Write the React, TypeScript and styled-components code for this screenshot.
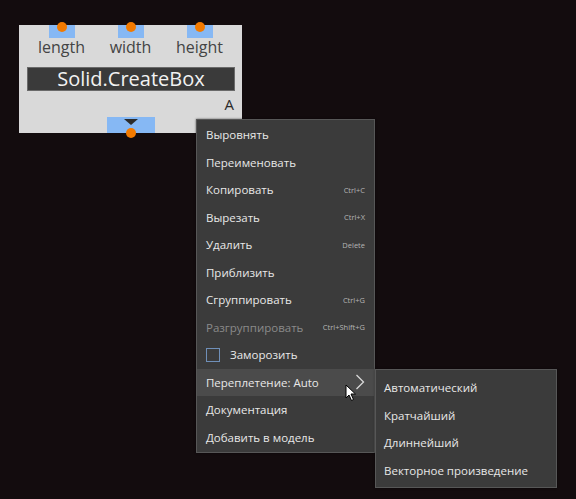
import React from 'react';
import styled, { createGlobalStyle } from 'styled-components';

const GlobalStyle = createGlobalStyle`
  html, body {
    margin: 0;
    padding: 0;
    background: #130c0e;
  }
  body {
    font-family: 'Open Sans', 'Liberation Sans', sans-serif;
  }
`;

const Canvas = styled.div`
  position: relative;
  width: 576px;
  height: 499px;
  overflow: hidden;
  background: #130c0e;
`;

/* ---------- node ---------- */

const Node = styled.div`
  position: absolute;
  left: 19px;
  top: 25px;
  width: 223px;
  height: 108px;
  background: #d9d9d9;
  display: flex;
  flex-direction: column;
  font-family: 'Open Sans', 'Liberation Sans', sans-serif;
`;

const PortGrid = styled.div`
  display: grid;
  grid-template-columns: repeat(3, 69px);
  justify-content: center;
`;

const InPort = styled.div`
  position: relative;
  justify-self: center;
  width: 26px;
  height: 13px;
  background: #86b8f4;
`;

const Dot = styled.span<{ $bottom?: boolean }>`
  position: absolute;
  left: 50%;
  width: 10px;
  height: 10px;
  margin-left: -5px;
  border-radius: 50%;
  background: #f27a00;
  ${(p) => (p.$bottom ? 'bottom: -5px;' : 'top: -3px;')}
`;

const PortLabel = styled.div`
  text-align: center;
  font-size: 16px;
  line-height: 19px;
  color: #444444;
`;

const Title = styled.div`
  margin: 10px 7px 0 8px;
  height: 24px;
  background: #3a3a3a;
  border: 1px solid #6a6a6a;
  box-sizing: border-box;
  color: #f2f2f2;
  font-size: 20px;
  line-height: 22px;
  text-align: center;
`;

const Lacing = styled.div`
  height: 26px;
  padding-right: 8px;
  display: flex;
  justify-content: flex-end;
  align-items: center;
  font-size: 15px;
  color: #2a2a2a;
`;

const OutPort = styled.div`
  position: relative;
  align-self: center;
  width: 48px;
  height: 16px;
  background: #86b8f4;
  display: flex;
  justify-content: center;
  padding-top: 2px;
  box-sizing: border-box;
`;

/* ---------- context menu ---------- */

const Menu = styled.div<{ $left: number; $top: number; $width: number }>`
  position: absolute;
  left: ${(p) => p.$left}px;
  top: ${(p) => p.$top}px;
  width: ${(p) => p.$width}px;
  box-sizing: border-box;
  background: #3b3b3b;
  border: 1px solid #575757;
  box-shadow: 0 0 2px rgba(0, 0, 0, 0.6);
  display: flex;
  flex-direction: column;
`;

const Item = styled.div<{ $active?: boolean; $disabled?: boolean; $pad: number }>`
  height: 27.5px;
  padding: 0 9px 0 ${(p) => p.$pad}px;
  display: flex;
  align-items: center;
  gap: 10px;
  font-size: 11.5px;
  color: ${(p) => (p.$disabled ? '#8a8a8a' : '#e8e8e8')};
  background: ${(p) => (p.$active ? '#4b4b4b' : 'transparent')};
`;

const Label = styled.span`
  flex: 1;
  white-space: nowrap;
`;

const Shortcut = styled.span`
  font-size: 7.5px;
  color: #b4b4b4;
`;

const Check = styled.span`
  width: 14px;
  height: 14px;
  box-sizing: border-box;
  border: 1.5px solid #6f8fb8;
`;

const Cursor = styled.svg`
  position: absolute;
  left: 345px;
  top: 384px;
`;

type Entry = { label: string; key?: string; disabled?: boolean };

const entries: Entry[] = [
  { label: 'Выровнять' },
  { label: 'Переименовать' },
  { label: 'Копировать', key: 'Ctrl+C' },
  { label: 'Вырезать', key: 'Ctrl+X' },
  { label: 'Удалить', key: 'Delete' },
  { label: 'Приблизить' },
  { label: 'Сгруппировать', key: 'Ctrl+G' },
  { label: 'Разгруппировать', key: 'Ctrl+Shift+G', disabled: true },
];

const lacingModes = ['Автоматический', 'Кратчайший', 'Длиннейший', 'Векторное произведение'];

export default function App() {
  return (
    <Canvas>
      <GlobalStyle />

      <Node>
        <PortGrid>
          {[0, 1, 2].map((i) => (
            <InPort key={i}>
              <Dot />
            </InPort>
          ))}
        </PortGrid>
        <PortGrid>
          <PortLabel>length</PortLabel>
          <PortLabel>width</PortLabel>
          <PortLabel>height</PortLabel>
        </PortGrid>
        <Title>Solid.CreateBox</Title>
        <Lacing>A</Lacing>
        <OutPort>
          <svg width="14" height="7" viewBox="0 0 14 7">
            <path d="M0 0 H14 L7 6 Z" fill="#2c2c2c" />
          </svg>
          <Dot $bottom />
        </OutPort>
      </Node>

      <Menu $left={196} $top={119} $width={179} style={{ paddingTop: 1, paddingBottom: 1 }}>
        {entries.map((e) => (
          <Item key={e.label} $pad={9} $disabled={e.disabled}>
            <Label>{e.label}</Label>
            {e.key && <Shortcut>{e.key}</Shortcut>}
          </Item>
        ))}
        <Item $pad={9}>
          <Check />
          <Label>Заморозить</Label>
        </Item>
        <Item $pad={9} $active>
          <Label>Переплетение: Auto</Label>
          <svg width="10" height="16" viewBox="0 0 10 16">
            <path d="M1.5 1 L8.5 8 L1.5 15" fill="none" stroke="#d8d8d8" strokeWidth="1.3" />
          </svg>
        </Item>
        <Item $pad={9}>
          <Label>Документация</Label>
        </Item>
        <Item $pad={9}>
          <Label>Добавить в модель</Label>
        </Item>
      </Menu>

      <Menu $left={375} $top={369} $width={182} style={{ paddingTop: 4, paddingBottom: 3 }}>
        {lacingModes.map((m) => (
          <Item key={m} $pad={8}>
            <Label>{m}</Label>
          </Item>
        ))}
      </Menu>

      <Cursor width="12" height="18" viewBox="0 0 12 18">
        <path
          d="M1 1 L1 14 L4 11 L6.5 16.5 L8.5 15.5 L6 10 L10.5 10 Z"
          fill="#ffffff"
          stroke="#000000"
          strokeWidth="1"
          strokeLinejoin="round"
        />
      </Cursor>
    </Canvas>
  );
}
